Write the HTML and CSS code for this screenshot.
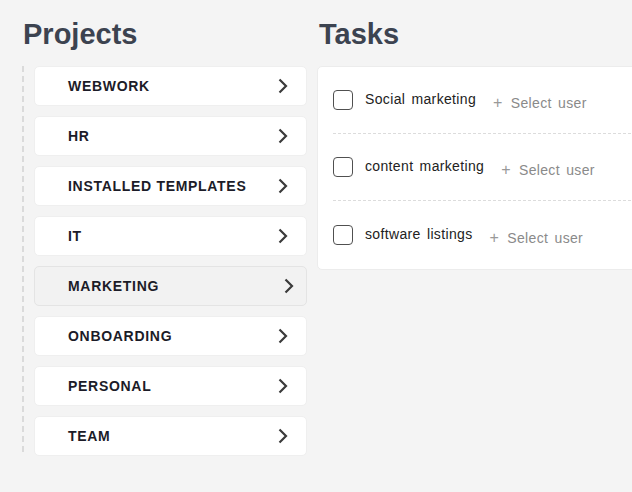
FILE: index.html
```html
<!DOCTYPE html>
<html>
<head>
<meta charset="utf-8">
<link rel="stylesheet" href="styles.css">
</head>
<body>
<div class="page">
  <section class="projects">
    <h1 class="title">Projects</h1>
    <div class="project-list">
      <div class="project"><span>WEBWORK</span><svg class="chev" viewBox="0 0 10 16"><path d="M1.5 1.5 L8 8 L1.5 14.5"/></svg></div>
      <div class="project"><span>HR</span><svg class="chev" viewBox="0 0 10 16"><path d="M1.5 1.5 L8 8 L1.5 14.5"/></svg></div>
      <div class="project"><span>INSTALLED TEMPLATES</span><svg class="chev" viewBox="0 0 10 16"><path d="M1.5 1.5 L8 8 L1.5 14.5"/></svg></div>
      <div class="project"><span>IT</span><svg class="chev" viewBox="0 0 10 16"><path d="M1.5 1.5 L8 8 L1.5 14.5"/></svg></div>
      <div class="project active"><span>MARKETING</span><svg class="chev" viewBox="0 0 10 16"><path d="M1.5 1.5 L8 8 L1.5 14.5"/></svg></div>
      <div class="project"><span>ONBOARDING</span><svg class="chev" viewBox="0 0 10 16"><path d="M1.5 1.5 L8 8 L1.5 14.5"/></svg></div>
      <div class="project"><span>PERSONAL</span><svg class="chev" viewBox="0 0 10 16"><path d="M1.5 1.5 L8 8 L1.5 14.5"/></svg></div>
      <div class="project"><span>TEAM</span><svg class="chev" viewBox="0 0 10 16"><path d="M1.5 1.5 L8 8 L1.5 14.5"/></svg></div>
    </div>
  </section>
  <section class="tasks">
    <h1 class="title">Tasks</h1>
    <div class="task-panel">
      <div class="task"><span class="check"></span><span class="name">Social marketing</span><span class="assign"><span class="plus">+</span>Select user</span></div>
      <div class="task"><span class="check"></span><span class="name">content marketing</span><span class="assign"><span class="plus">+</span>Select user</span></div>
      <div class="task"><span class="check"></span><span class="name">software listings</span><span class="assign"><span class="plus">+</span>Select user</span></div>
    </div>
  </section>
</div>
</body>
</html>
```
FILE: styles.css
```css
html, body {
  margin: 0;
  padding: 0;
  background: #f4f4f4;
  font-family: "Liberation Sans", Arial, sans-serif;
}
.page {
  display: flex;
  gap: 10px;
  padding: 16px 0 0 22px;
  width: 632px;
  height: 492px;
  box-sizing: border-box;
  overflow: hidden;
}
.title {
  margin: 0 0 14px 1px;
  font-size: 29px;
  line-height: 36px;
  font-weight: bold;
  color: #3c4350;
}
.tasks .title {
  margin-left: 2px;
}
.projects {
  width: 285px;
  flex: none;
}
.project-list {
  display: flex;
  flex-direction: column;
  gap: 10px;
  padding-left: 12px;
  background-image: linear-gradient(#dadada 60%, transparent 60%);
  background-size: 2px 10px;
  background-repeat: repeat-y;
  background-position: 0 0;
}
.project {
  height: 40px;
  box-sizing: border-box;
  display: flex;
  align-items: center;
  justify-content: space-between;
  padding: 0 18px 0 33px;
  background: #fff;
  border: 1px solid #efefef;
  border-radius: 5px;
  font-size: 14px;
  font-weight: bold;
  letter-spacing: 0.7px;
  color: #1c1c28;
}
.project.active {
  background: #f2f2f2;
  border-color: #e4e4e4;
  padding-right: 12px;
}
.chev {
  width: 10px;
  height: 16px;
  fill: none;
  stroke: #3b3b3b;
  stroke-width: 2.2;
}
.tasks {
  flex: 1;
  min-width: 0;
}
.task-panel {
  background: #fff;
  border: 1px solid #ececec;
  border-radius: 5px;
  padding: 0 0 0 15px;
  margin-right: -20px;
}
.task {
  height: 67px;
  box-sizing: border-box;
  display: flex;
  align-items: center;
  border-bottom: 1px dashed #dcdcdc;
  font-size: 14px;
  letter-spacing: 0.35px;
  word-spacing: 2px;
}
.task:last-child {
  border-bottom: none;
  height: 68px;
}
.check {
  width: 20px;
  height: 20px;
  box-sizing: border-box;
  border: 1.5px solid #505050;
  border-radius: 4px;
  margin-right: 12px;
  flex: none;
}
.name {
  color: #222;
  margin-top: -2px;
}
.assign {
  color: #8a8a8a;
  margin-left: 17px;
  margin-top: 5px;
}
.plus {
  font-size: 16px;
  margin-right: 8px;
  color: #999;
}
```
